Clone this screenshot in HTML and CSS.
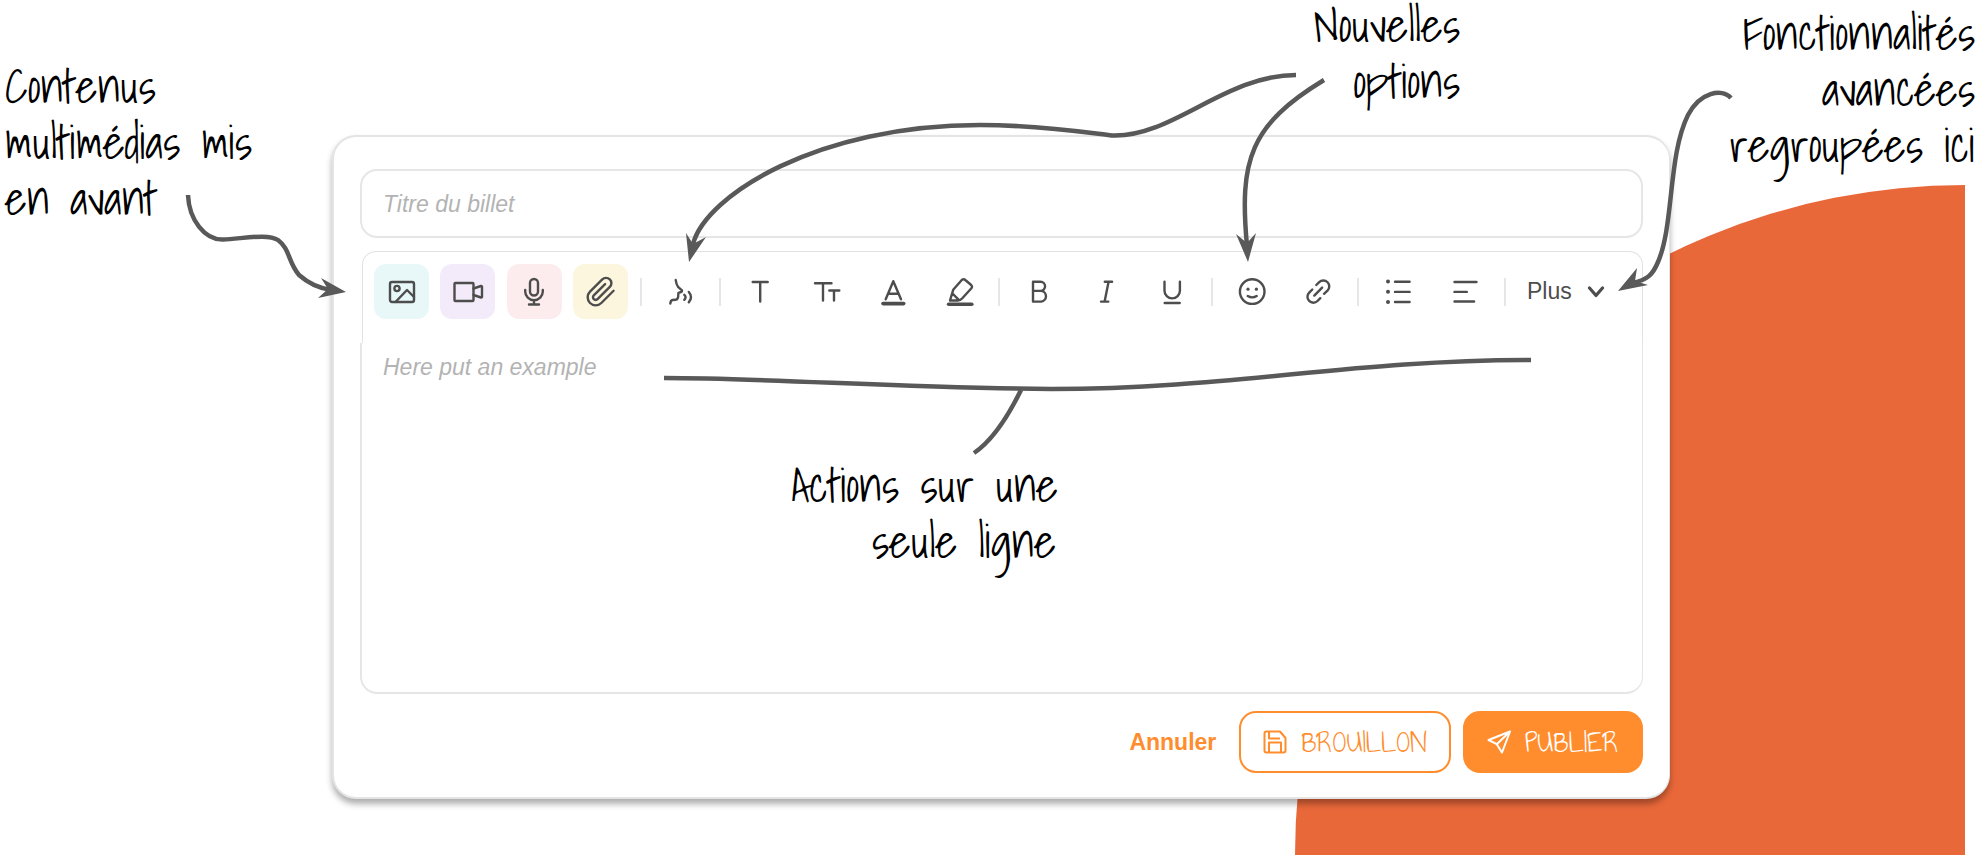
FILE: index.html
```html
<!DOCTYPE html>
<html lang="fr">
<head>
<meta charset="utf-8">
<title>Éditeur de billet</title>
<link rel="stylesheet" href="styles.css">
</head>
<body>
<main class="stage">
  <div class="quarter"></div>

  <form class="card">
    <input class="title-field" type="text" placeholder="Titre du billet" aria-label="Titre du billet">

    <div class="editor">
      <div class="toolbar" role="toolbar" aria-label="Mise en forme">
        <button type="button" class="tool tool-image" aria-label="Image"><svg class="icon" viewBox="0 0 32 32"><rect x="4" y="6" width="24" height="20" rx="2"/><circle cx="11" cy="12.5" r="2.6"/><path d="M9.500 26 21 14l7 7"/></svg></button>
        <button type="button" class="tool tool-video" aria-label="Vidéo"><svg class="icon" viewBox="0 0 32 32"><rect x="2.500" y="7" width="19" height="18" rx="1"/><path d="M21.500 12.500 29 10q1-.2 1 .8v9.900q0 1-1 .8l-7.500-2.500"/></svg></button>
        <button type="button" class="tool tool-audio" aria-label="Audio"><svg class="icon" viewBox="0 0 32 32"><rect x="12" y="3" width="8" height="16.500" rx="4"/><path d="M7.200 14v1.500a8.800 8.800 0 0 0 17.600 0V14M16 24.300v4M11 28.500h10"/></svg></button>
        <button type="button" class="tool tool-file" aria-label="Pièce jointe"><svg class="icon icon-clip" viewBox="0 0 24 24"><path d="M21.440 11.050l-9.190 9.190a6 6 0 0 1-8.490-8.490l9.190-9.190a4 4 0 0 1 5.660 5.660l-9.200 9.190a2 2 0 0 1-2.830-2.830l8.490-8.480"/></svg></button>
        <span class="rule"></span>
        <button type="button" class="tool" aria-label="Dictée"><svg class="icon" viewBox="0 0 32 32"><path d="M10.700 4c.3 3 1 5 2.600 7.200l3.400 2.900c.6.700.2 1.700-.7 1.900l-2.500.8c-.6 2 .2 3.300-.8 5.500-.4 1-1 1.500-2.200 1.500l-3 .2c-1.500.2-2 1.700-2.200 3.500M19.300 18.800q2.600 2.400 0 5M23.800 16q4.400 5 0 10.300"/></svg></button>
        <span class="rule"></span>
        <button type="button" class="tool" aria-label="Police"><svg class="icon" viewBox="0 0 32 32"><path d="M8.700 6h15M16.200 6v19.500"/></svg></button>
        <button type="button" class="tool" aria-label="Taille du texte"><svg class="icon" viewBox="0 0 32 32"><path d="M4 7.300h16.500M12 7.300v17.200M18.300 14.500h10M23 14.500v10"/></svg></button>
        <button type="button" class="tool" aria-label="Couleur du texte"><svg class="icon" viewBox="0 0 32 32"><path d="M8.700 23.300 16.300 5.200 24 23.300M11 17.800h10.600"/><path class="bar" d="M6 27.600h20.700"/></svg></button>
        <button type="button" class="tool" aria-label="Surlignage"><svg class="icon" viewBox="0 0 32 32"><path d="M18 3.800q1.800-1.200 3.300.2l5.900 5q1.500 1.600.2 3.200l-9.300 10.300q-1.700 1.800-4.300 2H6l3.200-10.700zM8.500 17.500l6.300 6.300"/><path class="bar" d="M4.600 28.300h23.200"/></svg></button>
        <span class="rule"></span>
        <button type="button" class="tool" aria-label="Gras"><svg class="icon" viewBox="0 0 32 32"><path d="M10 5.700h7.500a4.600 4.600 0 0 1 0 9.200H10zM10 14.900h8.300a5.400 5.400 0 0 1 0 10.700H10z"/></svg></button>
        <button type="button" class="tool" aria-label="Italique"><svg class="icon" viewBox="0 0 32 32"><path d="M14.800 5.800h7.300M11 25.600h7.300M18.600 5.800l-4 19.800"/></svg></button>
        <button type="button" class="tool" aria-label="Souligné"><svg class="icon" viewBox="0 0 32 32"><path d="M8.500 5.700v9a7.700 7.700 0 0 0 15.400 0v-9M8.700 27h15"/></svg></button>
        <span class="rule"></span>
        <button type="button" class="tool" aria-label="Émoticône"><svg class="icon" viewBox="0 0 32 32"><circle cx="16.200" cy="15.600" r="12.300"/><path d="M11.700 20q4.500 2.700 9 0"/><circle class="dot" cx="12" cy="13.200" r="1.600"/><circle class="dot" cx="20.400" cy="13.200" r="1.600"/></svg></button>
        <button type="button" class="tool" aria-label="Lien"><svg class="icon" viewBox="0 0 32 32"><path d="M14.300 9l2.900-2.800a5.900 5.900 0 0 1 8.300 8.400L22 17.800M10.300 13.500l-3.100 3.100a5.900 5.900 0 0 0 8.300 8.400l2.800-2.800M12.300 19.600l7.800-8"/></svg></button>
        <span class="rule"></span>
        <button type="button" class="tool" aria-label="Liste"><svg class="icon" viewBox="0 0 32 32"><path d="M13 5.800h14.600M13 15.900h14.600M13 26h14.600"/><circle class="dot" cx="6" cy="5.500" r="2"/><circle class="dot" cx="6" cy="15.800" r="2"/><circle class="dot" cx="6" cy="26" r="2"/></svg></button>
        <button type="button" class="tool" aria-label="Alignement"><svg class="icon" viewBox="0 0 32 32"><path d="M5.500 6h22M5.500 15.900h12.300M5.500 25.500h19.600"/></svg></button>
        <span class="rule"></span>
        <button type="button" class="more">Plus<svg class="chevron" viewBox="0 0 18 12"><path d="M2.500 2 9 9.500 15.500 2"/></svg></button>
      </div>
      <textarea class="content" placeholder="Here put an example" aria-label="Contenu du billet"></textarea>
    </div>

    <div class="actions">
      <button type="button" class="cancel">Annuler</button>
      <button type="button" class="action draft"><svg class="action-icon" viewBox="0 0 24 24"><path d="M3.500 1.500h13.500l5.500 6.500v12.500q0 2-2 2h-17q-2 0-2-2v-17q0-2 2-2zM6 2v6.500h11M6 22v-9.500h12V22"/></svg>BROUILLON</button>
      <button type="submit" class="action publish"><svg class="action-icon" viewBox="0 0 24 24"><path d="M23 1.500 1.500 10l8.300 4.200L15 22.500zM23 1.500 9.800 14.200"/></svg>PUBLIER</button>
    </div>
  </form>

  <svg class="arrows" viewBox="0 0 1978 868" aria-hidden="true">
    <path d="M188 195C189 220 205 240 223 239.500S268 233 278 240C290 249 288 262 299 275C308 283 318 288 331 290"/>
    <path d="M1296 75C1225 75 1172 138 1112 135.500C1090 133 1040 125 980 125C818 125 706 195 693 244"/>
    <path d="M1324 80C1250 125 1239 160 1247 246"/>
    <path d="M1731 98C1722 88 1700 92 1688 115C1668 155 1674 225 1658 262C1653 274 1648 280 1632 283"/>
    <path d="M664 378C770 378 900 388 1051 389C1230 389 1350 360 1531 360"/>
    <path d="M1021 390Q998 437 974 453"/>
    <path class="head" d="M346 292 321 278 328 289 318 298z"/>
    <path class="head" d="M689 262 686 233 693 244 706 237z"/>
    <path class="head" d="M1248 262 1236 234 1247 243 1256 233z"/>
    <path class="head" d="M1618 291 1637 268 1635 281 1648 285z"/>
  </svg>

  <p class="note note-media">Contenus<br>multimédias mis<br>en avant</p>
  <p class="note note-options">Nouvelles<br>options</p>
  <p class="note note-advanced">Fonctionnalités<br>avancées<br>regroupées ici</p>
  <p class="note note-line">Actions sur une<br>seule ligne</p>
</main>
</body>
</html>
```
FILE: styles.css
```css
* { box-sizing: border-box; }

body {
  margin: 0;
  background: #fff;
  color: #4d4d4d;
  font-family: "Liberation Sans", Arial, sans-serif;
  font-size: 23px;
}

button, input, textarea {
  font: inherit;
  color: inherit;
}

button {
  padding: 0;
  border: 0;
  background: none;
}

.stage {
  position: relative;
  min-height: 100vh;
  padding: 135px 308px 68px 332px;
  overflow: hidden;
}

.quarter {
  position: absolute;
  right: 13px;
  bottom: 13px;
  width: 670px;
  height: 670px;
  border-top-left-radius: 100%;
  background: #e9683a;
}

.card {
  position: relative;
  display: flex;
  flex-direction: column;
  padding: 32px 26px 24px;
  border: 2px solid #e4e4e4;
  border-right-width: 1px;
  border-radius: 24px;
  background: #fff;
  box-shadow: 0 5px 6px rgba(0, 0, 0, .32);
}

.title-field {
  width: 100%;
  height: 69px;
  padding: 2px 21px 0;
  border: 2px solid #e6e6e6;
  border-radius: 17px;
  background: #fff;
}

.title-field::placeholder,
.content::placeholder {
  color: #b3b3b3;
  font-style: italic;
  opacity: 1;
}

.editor {
  margin-top: 13px;
}

.toolbar {
  display: flex;
  align-items: center;
  justify-content: space-between;
  height: 92px;
  margin-left: 2px;
  padding: 12px 25px 24px 11px;
  border: 1px solid #e2e2e2;
  border-bottom: 0;
  border-radius: 14px 14px 0 0;
}

.tool {
  display: grid;
  place-items: center;
  width: 55px;
  height: 55px;
  border-radius: 12px;
}

.tool-image { background: #e8f8f8; }
.tool-video { background: #f3ebf9; }
.tool-audio { background: #fdeced; }
.tool-file { background: #fcf6df; }

.icon {
  width: 32px;
  height: 32px;
  fill: none;
  stroke: #4d4d4d;
  stroke-width: 2.4;
  stroke-linecap: round;
  stroke-linejoin: round;
}

.icon-clip { stroke-width: 1.8; }
.icon .bar { stroke-width: 3.6; }
.icon .dot { fill: #4d4d4d; stroke: none; }

.rule {
  width: 2px;
  height: 28px;
  background: #e6e6e6;
}

.more {
  display: flex;
  align-items: center;
  justify-content: space-between;
  width: 100px;
  height: 55px;
  padding: 0 12px 0 10px;
}

.chevron {
  width: 18px;
  height: 12px;
  fill: none;
  stroke: #4d4d4d;
  stroke-width: 3.2;
  stroke-linecap: round;
  stroke-linejoin: round;
}

.content {
  display: block;
  width: 100%;
  height: 351px;
  padding: 11px 21px;
  border: 2px solid #e6e6e6;
  border-top: 0;
  border-right-width: 1px;
  border-radius: 0 0 17px 17px;
  background: #fff;
  line-height: 26px;
  resize: none;
}

.actions {
  display: flex;
  align-items: center;
  justify-content: flex-end;
  gap: 12px;
  margin-top: 17px;
}

.cancel {
  margin-right: 11px;
  color: #ff8d2e;
  font-weight: bold;
}

.action {
  display: flex;
  align-items: center;
  gap: 14px;
  height: 62px;
  padding: 0 22px;
  border: 2px solid #ff8d2e;
  border-radius: 17px;
  font-family: "Annie Use Your Telescope", "Shadows Into Light", Lato, sans-serif;
  font-size: 32px;
}

.draft { color: #ff8d2e; }
.publish { background: #ff8d2e; color: #fff; }

.action-icon {
  width: 24px;
  height: 24px;
  fill: none;
  stroke: currentColor;
  stroke-width: 2;
  stroke-linejoin: round;
}

.arrows {
  position: absolute;
  top: 0;
  left: 0;
  width: 1978px;
  height: 868px;
  pointer-events: none;
  fill: none;
  stroke: #595959;
  stroke-width: 4.5;
}

.arrows .head {
  fill: #595959;
  stroke: none;
}

.note {
  position: absolute;
  margin: 0;
  color: #000;
  font-family: "Shadows Into Light", Lato, sans-serif;
  font-size: 47px;
  line-height: 56px;
  white-space: nowrap;
}

.note-media { top: 58px; left: 5px; }
.note-options { top: -3px; right: 518px; text-align: right; }
.note-advanced { top: 5px; right: 3px; text-align: right; }
.note-line { top: 457px; left: 791px; width: 265px; text-align: right; }
```
